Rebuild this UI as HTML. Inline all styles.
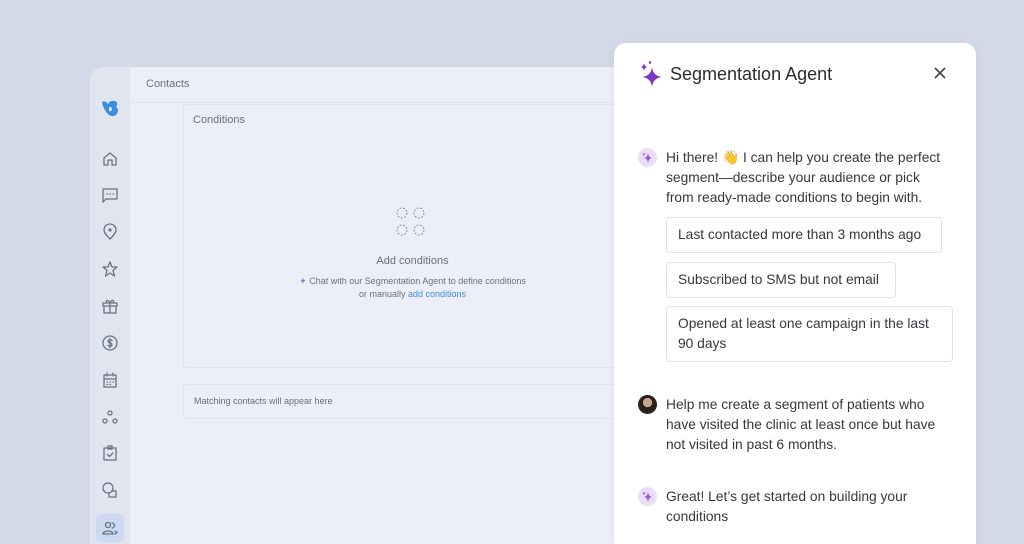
<!DOCTYPE html>
<html><head><meta charset="utf-8"><style>
*{margin:0;padding:0;box-sizing:border-box}
html,body{width:1024px;height:544px;overflow:hidden}
body{background:#d3d9e8;font-family:"Liberation Sans",sans-serif;position:relative}
.abs{position:absolute}
.frame{left:90px;top:67px;width:600px;height:477px;background:#eceff7;border-radius:14px 0 0 0;overflow:hidden}
.side{left:0;top:0;width:40px;height:100%;background:#e0e5f0}
.ic{position:absolute;left:11px;width:18px;height:18px}
.ic svg{width:18px;height:18px;fill:none;stroke:#6b7280;stroke-width:1.3;stroke-linecap:round;stroke-linejoin:round}
.panel{left:614px;top:43px;width:362px;height:501px;background:#fff;border-radius:12px 12px 0 0;box-shadow:0 2px 10px rgba(0,0,0,.06)}
.t{position:absolute;font-size:13.8px;line-height:20px;color:#35383d}
.chip{position:absolute;left:52px;border:1px solid #dde1e8;border-radius:4px;font-size:13.8px;line-height:20px;color:#35383d;padding:7px 11px}
.bot{position:absolute;left:24px;width:19px;height:19px;border-radius:50%;background:#e9ddf7}
</style></head><body>
<div class="abs frame">
  <div class="abs side">
    <svg class="abs" style="left:10px;top:32px" width="22" height="20" viewBox="0 0 22 20"><path d="M2 3 Q5 1 8 5 Q10 1 15 2 Q19 4 16 8 Q20 11 16 16 Q11 19 7 14 Q3 9 2 3Z" fill="#3d8de0"/><path d="M9 8 Q12 8 12 10 Q12 13 9 12" fill="#e0e5f0"/></svg>
    <div class="ic" style="top:83px"><svg viewBox="0 0 18 18"><path d="M3 8 L9 3 L15 8 V15 H11 V10 H7 V15 H3Z"/></svg></div>
    <div class="ic" style="top:119px"><svg viewBox="0 0 18 18"><path d="M2 3 H16 V13 H5 L2 16Z"/><path d="M6 8h.5M9 8h.5M12 8h.5"/></svg></div>
    <div class="ic" style="top:156px"><svg viewBox="0 0 18 18"><path d="M9 16 C4 11 3 9 3 7 A6 6 0 0 1 15 7 C15 9 14 11 9 16Z"/><circle cx="9" cy="7" r="1"/></svg></div>
    <div class="ic" style="top:193px"><svg viewBox="0 0 18 18"><path d="M9 2 L11 7 L16 7 L12 10.5 L13.5 16 L9 13 L4.5 16 L6 10.5 L2 7 L7 7Z"/></svg></div>
    <div class="ic" style="top:230px"><svg viewBox="0 0 18 18"><path d="M2 6 H16 V9 H2Z M3 9 V16 H15 V9 M9 6 V16 M9 6 C7 2 4 3 6 6 M9 6 C11 2 14 3 12 6"/></svg></div>
    <div class="ic" style="top:267px"><svg viewBox="0 0 18 18"><circle cx="9" cy="9" r="7"/><path d="M11 6.5 C10 5.5 7 5.5 7 7.3 C7 9.2 11 8.6 11 10.6 C11 12.5 8 12.5 7 11.5 M9 4.5V13.5"/></svg></div>
    <div class="ic" style="top:304px"><svg viewBox="0 0 18 18"><path d="M3 4 H15 V16 H3Z M3 8 H15 M6 2 V5 M12 2 V5"/><path d="M6 11h.5M9 11h.5M12 11h.5M6 13.5h.5M9 13.5h.5"/></svg></div>
    <div class="ic" style="top:341px"><svg viewBox="0 0 18 18"><circle cx="9" cy="5" r="2"/><circle cx="4" cy="13" r="2"/><circle cx="14" cy="13" r="2"/></svg></div>
    <div class="ic" style="top:377px"><svg viewBox="0 0 18 18"><path d="M3 4 H15 V16 H3Z M7 2 H11 V5 H7Z M6.5 10.5 L8.5 12.5 L12 9"/></svg></div>
    <div class="ic" style="top:414px"><svg viewBox="0 0 18 18"><circle cx="7" cy="7" r="5"/><path d="M11 10 H15 V16 H8 V12"/></svg></div>
    <div class="abs" style="left:6px;top:447px;width:28px;height:28px;background:#ccd9f2;border-radius:5px"></div>
    <div class="ic" style="top:452px"><svg viewBox="0 0 18 18"><circle cx="7" cy="6" r="2.5"/><path d="M2 15 C2 11 12 11 12 15Z M11 4 A2.5 2.5 0 0 1 11 9 M14 12 L16 13.5 L14 15"/></svg></div>
  </div>
  <div class="abs" style="left:56px;top:11px;font-size:11px;color:#6b7078">Contacts</div>
  <div class="abs" style="left:40px;top:35px;width:560px;height:1px;background:#e2e5ec"></div>
  <div class="abs" style="left:93px;top:37px;width:520px;height:264px;border:1px solid #e3e6ed;border-radius:3px"></div>
  <div class="abs" style="left:103px;top:47px;font-size:11px;color:#6b7078">Conditions</div>
  <svg class="abs" style="left:305px;top:139px" width="32" height="32" viewBox="0 0 32 32" fill="none" stroke="#8a8f98" stroke-width="1" stroke-dasharray="2 1.5"><circle cx="7" cy="7" r="5"/><circle cx="24" cy="7" r="5"/><circle cx="7" cy="24" r="5"/><circle cx="24" cy="24" r="5"/></svg>
  <div class="abs" style="left:200px;top:188px;width:245px;text-align:center;font-size:11px;color:#6b7078">Add conditions</div>
  <div class="abs" style="left:190px;top:208px;width:265px;text-align:center;font-size:9px;line-height:13px;color:#6b7078"><span style="color:#a070d0">✦</span> Chat with our Segmentation Agent to define conditions<br>or manually <span style="color:#3d8de0">add conditions</span></div>
  <div class="abs" style="left:93px;top:317px;width:520px;height:35px;border:1px solid #e3e6ed;border-radius:3px"></div>
  <div class="abs" style="left:104px;top:329px;font-size:9px;color:#6b7078">Matching contacts will appear here</div>
</div>
<div class="abs panel">
  <svg class="abs" style="left:24px;top:17px" width="26" height="28" viewBox="0 0 26 28"><path d="M14 7 Q15 16 24 17 Q15 18 14 27 Q13 18 4 17 Q13 16 14 7Z" fill="#7f35c0"/><path d="M6 3 Q6.5 6.5 9.5 7 Q6.5 7.5 6 11 Q5.5 7.5 2.5 7 Q5.5 6.5 6 3Z" fill="#7f35c0"/><circle cx="12" cy="2.5" r="1.3" fill="#7f35c0"/></svg>
  <div class="t" style="left:56px;top:19px;font-size:18px;line-height:24px;color:#2a2d31">Segmentation Agent</div>
  <svg class="abs" style="left:320px;top:24px" width="12" height="12" viewBox="0 0 12 12" stroke="#444" stroke-width="1.6"><path d="M1 1L11 11M11 1L1 11"/></svg>
  <div class="bot" style="top:105px"><svg width="19" height="19" viewBox="0 0 19 19"><path d="M10 5 Q10.5 9.5 14 10 Q10.5 10.5 10 15 Q9.5 10.5 6 10 Q9.5 9.5 10 5Z" fill="#9b59d0"/><path d="M6 4.5 Q6.2 6 7.5 6.3 Q6.2 6.6 6 8 Q5.8 6.6 4.5 6.3 Q5.8 6 6 4.5Z" fill="#9b59d0"/></svg></div>
  <div class="t" style="left:52px;top:105px">Hi there! 👋 I can help you create the perfect<br>segment—describe your audience or pick<br>from ready-made conditions to begin with.</div>
  <div class="chip" style="top:174px;width:276px">Last contacted more than 3 months ago</div>
  <div class="chip" style="top:219px;width:230px">Subscribed to SMS but not email</div>
  <div class="chip" style="top:263px;width:287px">Opened at least one campaign in the last 90 days</div>
  <div class="abs" style="left:24px;top:352px;width:19px;height:19px;border-radius:50%;background:radial-gradient(circle at 50% 40%,#c9a58a 0 30%,#2a211d 32%)"></div>
  <div class="t" style="left:52px;top:352px">Help me create a segment of patients who<br>have visited the clinic at least once but have<br>not visited in past 6 months.</div>
  <div class="bot" style="top:444px"><svg width="19" height="19" viewBox="0 0 19 19"><path d="M10 5 Q10.5 9.5 14 10 Q10.5 10.5 10 15 Q9.5 10.5 6 10 Q9.5 9.5 10 5Z" fill="#9b59d0"/><path d="M6 4.5 Q6.2 6 7.5 6.3 Q6.2 6.6 6 8 Q5.8 6.6 4.5 6.3 Q5.8 6 6 4.5Z" fill="#9b59d0"/></svg></div>
  <div class="t" style="left:52px;top:444px">Great! Let’s get started on building your<br>conditions</div>
</div>
</body></html>
